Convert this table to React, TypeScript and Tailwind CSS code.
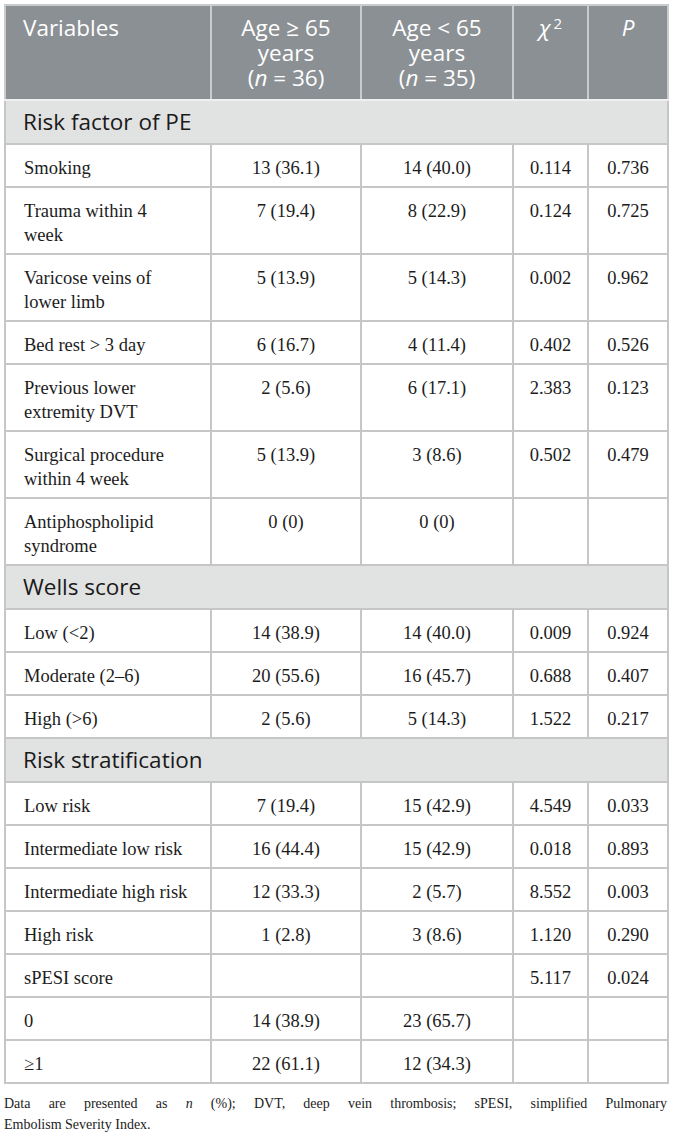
type Row = { label: string[]; a?: string; b?: string; chi?: string; p?: string }
type Section = { title: string; rows: Row[] }

const sections: Section[] = [
  {
    title: 'Risk factor of PE',
    rows: [
      { label: ['Smoking'], a: '13 (36.1)', b: '14 (40.0)', chi: '0.114', p: '0.736' },
      { label: ['Trauma within 4', 'week'], a: '7 (19.4)', b: '8 (22.9)', chi: '0.124', p: '0.725' },
      { label: ['Varicose veins of', 'lower limb'], a: '5 (13.9)', b: '5 (14.3)', chi: '0.002', p: '0.962' },
      { label: ['Bed rest > 3 day'], a: '6 (16.7)', b: '4 (11.4)', chi: '0.402', p: '0.526' },
      { label: ['Previous lower', 'extremity DVT'], a: '2 (5.6)', b: '6 (17.1)', chi: '2.383', p: '0.123' },
      { label: ['Surgical procedure', 'within 4 week'], a: '5 (13.9)', b: '3 (8.6)', chi: '0.502', p: '0.479' },
      { label: ['Antiphospholipid', 'syndrome'], a: '0 (0)', b: '0 (0)' },
    ],
  },
  {
    title: 'Wells score',
    rows: [
      { label: ['Low (<2)'], a: '14 (38.9)', b: '14 (40.0)', chi: '0.009', p: '0.924' },
      { label: ['Moderate (2–6)'], a: '20 (55.6)', b: '16 (45.7)', chi: '0.688', p: '0.407' },
      { label: ['High (>6)'], a: '2 (5.6)', b: '5 (14.3)', chi: '1.522', p: '0.217' },
    ],
  },
  {
    title: 'Risk stratification',
    rows: [
      { label: ['Low risk'], a: '7 (19.4)', b: '15 (42.9)', chi: '4.549', p: '0.033' },
      { label: ['Intermediate low risk'], a: '16 (44.4)', b: '15 (42.9)', chi: '0.018', p: '0.893' },
      { label: ['Intermediate high risk'], a: '12 (33.3)', b: '2 (5.7)', chi: '8.552', p: '0.003' },
      { label: ['High risk'], a: '1 (2.8)', b: '3 (8.6)', chi: '1.120', p: '0.290' },
      { label: ['sPESI score'], chi: '5.117', p: '0.024' },
      { label: ['0'], a: '14 (38.9)', b: '23 (65.7)' },
      { label: ['≥1'], a: '22 (61.1)', b: '12 (34.3)' },
    ],
  },
]

const th = 'border-2 border-[#c9cbcc] border-b-[#eef0f0] px-[8px] pt-[9px] pb-[9px] align-top font-normal'
const td = 'border-2 border-[#c6c6c6] pt-[11px] pb-[6px] align-top text-center whitespace-nowrap'

export default function App() {
  return (
    <div className="min-h-[1140px] w-[673px] bg-white pt-[4px] pl-[4px]">
      <table className="w-[663px] table-fixed border-collapse text-[#1c1c1c]">
        <colgroup>
          <col className="w-[206px]" />
          <col className="w-[150px]" />
          <col className="w-[152px]" />
          <col className="w-[75px]" />
          <col className="w-[80px]" />
        </colgroup>
        <thead className="bg-[#8b9094] font-['Open_Sans',sans-serif] text-[22.5px] leading-[25px] text-white">
          <tr className="h-[94px]">
            <th className={`${th} pl-[17px] text-left`}>Variables</th>
            <th className={`${th} text-center`}>
              <div>Age ≥ 65</div>
              <div>years</div>
              <div>(<i>n</i> = 36)</div>
            </th>
            <th className={`${th} text-center`}>
              <div>Age &lt; 65</div>
              <div>years</div>
              <div>(<i>n</i> = 35)</div>
            </th>
            <th className={`${th} text-center`}>
              <i>χ</i>
              <sup className="ml-[3px] text-[15px]">2</sup>
            </th>
            <th className={`${th} text-center`}>
              <i>P</i>
            </th>
          </tr>
        </thead>
        <tbody className="font-['Liberation_Serif',serif] text-[18.5px] leading-[24px]">
          {sections.map((section) => (
            <SectionRows key={section.title} section={section} />
          ))}
        </tbody>
      </table>
      <div className="mt-[9px] w-[663px] font-['Liberation_Serif',serif] text-[14px] leading-[21px] text-[#1c1c1c]">
        <p className="text-justify [text-align-last:justify]">
          Data are presented as <i>n</i> (%); DVT, deep vein thrombosis; sPESI, simplified Pulmonary
        </p>
        <p>Embolism Severity Index.</p>
      </div>
    </div>
  )
}

function SectionRows({ section }: { section: Section }) {
  return (
    <>
      <tr className="h-[44px] bg-[#e1e2e2]">
        <td colSpan={5} className="border-2 border-[#c6c6c6] pl-[17px] align-middle font-['Open_Sans',sans-serif] text-[22.5px] leading-[26px] text-[#1a1a1a]">
          {section.title}
        </td>
      </tr>
      {section.rows.map((row) => (
        <tr key={row.label.join(' ')} className={row.label.length > 1 ? 'h-[67px]' : 'h-[43px]'}>
          <td className={`${td} pl-[18px] text-left`}>
            {row.label.map((line, index) => (
              <div key={index}>{line}</div>
            ))}
          </td>
          <td className={td}>{row.a}</td>
          <td className={td}>{row.b}</td>
          <td className={td}>{row.chi}</td>
          <td className={td}>{row.p}</td>
        </tr>
      ))}
    </>
  )
}
